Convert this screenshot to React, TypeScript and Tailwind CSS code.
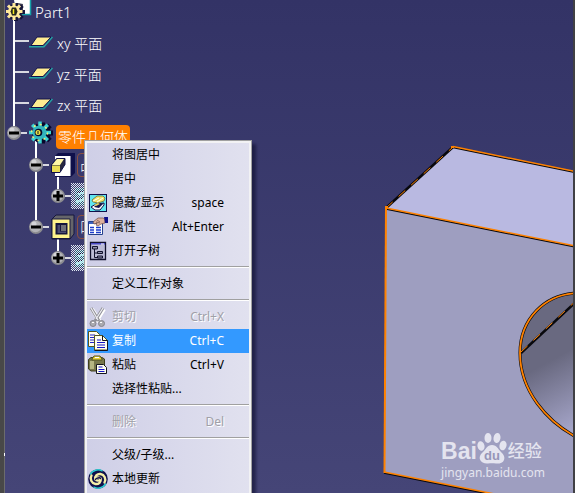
import React from "react";

type IconName = "visibility" | "properties" | "subtree" | "cut" | "copy" | "paste" | "update";

interface MenuEntry {
  label: string;
  shortcut?: string;
  icon?: IconName;
  disabled?: boolean;
  active?: boolean;
}

const MENU_GROUPS: MenuEntry[][] = [
  [
    { label: "将图居中" },
    { label: "居中" },
    { label: "隐藏/显示", shortcut: "space", icon: "visibility" },
    { label: "属性", shortcut: "Alt+Enter", icon: "properties" },
    { label: "打开子树", icon: "subtree" },
  ],
  [{ label: "定义工作对象" }],
  [
    { label: "剪切", shortcut: "Ctrl+X", icon: "cut", disabled: true },
    { label: "复制", shortcut: "Ctrl+C", icon: "copy", active: true },
    { label: "粘贴", shortcut: "Ctrl+V", icon: "paste" },
    { label: "选择性粘贴..." },
  ],
  [{ label: "删除", shortcut: "Del", disabled: true }],
  [{ label: "父级/子级..." }, { label: "本地更新", icon: "update" }],
];

const PLANES = ["xy 平面", "yz 平面", "zx 平面"];

/* ---------- Menu icons ---------- */

const MenuIcon: React.FC<{ name: IconName }> = ({ name }) => {
  switch (name) {
    case "visibility":
      return (
        <svg viewBox="0 0 20 20" className="h-5 w-5">
          <rect x="1.5" y="1.5" width="17" height="17" fill="#5fe6f0" stroke="#10104a" />
          <path d="M9 3h6l2 2-1 3-6 2-5-1-1-2z" fill="#f3e368" stroke="#6b6b30" strokeWidth=".8" />
          <path d="M5 8l6-3M9 9l6-4" stroke="#fff" />
          <path d="M8 11l8-1v2l-4 5H7l-4-3z" fill="#fff" stroke="#10104a" />
          <path d="M9 11l7-1-5 5-5-1z" fill="#17174f" />
          <path d="M6 12l4-2 2 1-4 2z" fill="#e8d860" />
        </svg>
      );
    case "properties":
      return (
        <svg viewBox="0 0 20 20" className="h-5 w-5">
          <path d="M.5 4.500h14v13H.5z" fill="#fff" stroke="#24408c" />
          <path d="M1 5h8v2H1z" fill="#3b62c0" />
          <path d="M2 10.500h4M8 10.500h5M2 13h4M8 13h5M2 15.500h4M8 15.500h5" stroke="#1c3ccc" strokeWidth="1.300" />
          <path d="M5 5l5-4h5l2 1v4l-4 1-3 2-2-1 1-2-3 1z" fill="#dcb09c" stroke="#6d4a44" strokeWidth=".7" />
          <path d="M9 3l3 2M8 5l4 1" stroke="#6d4a44" strokeWidth=".7" />
          <path d="M16 0h4v6h-3z" fill="#10108a" />
        </svg>
      );
    case "subtree":
      return (
        <svg viewBox="0 0 20 20" className="h-5 w-5">
          <path d="M2.500 1.500h15v17h-15z" fill="#bcbcd6" stroke="#11112c" strokeWidth="1.300" />
          <path d="M3 2h14v1.500H3z" fill="#4848c4" />
          <path d="M13 3h3" stroke="#fff" />
          <path d="M6.500 7v9.500H11M7 12h3" fill="none" stroke="#11112c" />
          <path d="M4.500 5.500h5v2.500h-5zM9.500 10.500h5v2h-5zM9.500 15h5v2h-5z" fill="#8e8ea8" stroke="#11112c" />
        </svg>
      );
    case "cut":
      return (
        <svg viewBox="0 0 20 20" className="h-5 w-5" fill="none">
          <path d="M4 2l8 13M16 2L8 15" stroke="#fff" strokeWidth="4" />
          <path d="M3 1l8 13M15 1L7 14" stroke="#919198" strokeWidth="3" />
          <path d="M3 1l7 12M15 1L8 12" stroke="#eeeef4" strokeWidth="1.200" />
          <circle cx="5" cy="16.500" r="3" fill="#aaaab0" stroke="#85858c" />
          <circle cx="13.500" cy="16.500" r="3" fill="#aaaab0" stroke="#85858c" />
          <path d="M4 15.500h2M12 15.500h2" stroke="#fff" />
        </svg>
      );
    case "copy":
      return (
        <svg viewBox="0 0 20 20" className="h-5 w-5">
          <path d="M.5.500h8l3 3v12H.5z" fill="#fffff0" stroke="#55551e" />
          <path d="M2 4h5M2 6.500h4M2 9h4M2 11.500h4" stroke="#2424c8" />
          <path d="M6.500 4.500h8l5 5v9.500h-13z" fill="#fffff0" stroke="#55551e" />
          <path d="M14.500 4.500v5h5M19.500 9.500V19.500h-13" fill="none" stroke="#15151c" />
          <path d="M9 9h4M9 11.500h8M9 14h8M9 16.500h8" stroke="#1414c8" />
        </svg>
      );
    case "paste":
      return (
        <svg viewBox="0 0 20 20" className="h-5 w-5">
          <path d="M.5 4.500L3 2.500h11l2.500 1.500v10l-3 2H3l-2.500-2z" fill="#77774c" stroke="#3f3f1c" />
          <path d="M2 6h4v8H2z" fill="#b5b582" />
          <path d="M4 4l2-3h6l2 3v1H4z" fill="#ecd33a" stroke="#55551e" />
          <path d="M7 2.500h4" stroke="#fff" />
          <path d="M8.500 9.500h7l3 3v6h-10z" fill="#fffff0" stroke="#15151c" />
          <path d="M10.500 12h4M10.500 14.500h6M10.500 16.500h6" stroke="#1414c8" />
        </svg>
      );
    case "update":
      return (
        <svg viewBox="0 0 20 20" className="h-5 w-5" fill="none" strokeLinecap="round">
          <circle cx="10" cy="10" r="9.800" fill="#10104c" />
          <path d="M2.500 5A9 9 0 0 1 14 1.800M17.500 15A9 9 0 0 1 6 18.200" stroke="#29ccd0" strokeWidth="1.500" />
          <path d="M12.500 9.500c0 2.500-4 3-5 .5-1-3 2-5.500 5-5 4 .7 6 5 4 8.500" stroke="#f5efa8" strokeWidth="2.400" />
          <path d="M7.500 10.500c0-2.500 4-3 5-.5 1 3-2 5.500-5 5-4-.7-6-5-4-8.500" stroke="#f5efa8" strokeWidth="2.400" />
          <path d="M7.500 10.500c.5-1.500 4.500-2.500 5-1" stroke="#10104c" strokeWidth="1.400" />
        </svg>
      );
  }
};

/* ---------- Tree icons ---------- */

const TEETH = [0, 45, 90, 135, 180, 225, 270, 315];

const Teeth: React.FC<{ cx: number; cy: number; r: number; width: number; color: string }> = ({
  cx,
  cy,
  r,
  width,
  color,
}) => (
  <g stroke={color} strokeWidth={width}>
    {TEETH.map((angle) => (
      <path key={angle} d={`M${cx} ${cy}v${-r}`} transform={`rotate(${angle} ${cx} ${cy})`} />
    ))}
  </g>
);

const PartIcon = () => (
  <svg viewBox="0 0 27 28" className="h-7 w-[27px] shrink-0">
    <path d="M8 0h17v15H11z" fill="#fff" />
    <path d="M24.500 0v14.500H16" fill="none" stroke="#16a0a8" strokeWidth="1.500" />
    <path d="M12 3l5 1v9l-4 5z" fill="#4b4b5c" />
    <path d="M8 18v10" stroke="#fff" strokeWidth="2" />
    <Teeth cx={10} cy={12} r={9} width={4} color="#16163c" />
    <circle cx="9" cy="12" r="7" fill="#16163c" />
    <Teeth cx={8} cy={11.5} r={8.500} width={3} color="#ffe99a" />
    <circle cx="8" cy="11.500" r="6" fill="#ffe99a" />
    <path d="M6 7.500h4l1.500 4-1.500 4H6l-1.500-4z" fill="#26261c" />
    <path d="M7.500 9v5" stroke="#f0e820" strokeWidth="1.500" />
  </svg>
);

const PlaneIcon = () => (
  <svg viewBox="0 0 24 12" className="h-3 w-6">
    <path d="M0 10.800h15L23.500 1" fill="none" stroke="#23a3a4" strokeWidth="1.500" />
    <path d="M8 1h14l-8 8.500H2z" fill="#ffed91" stroke="#10104a" />
  </svg>
);

const BodyIcon = () => (
  <svg viewBox="0 0 24 28" className="h-7 w-6">
    <path d="M7 20v8" stroke="#fff" strokeWidth="2" />
    <Teeth cx={13.5} cy={12} r={10.500} width={5} color="#08082c" />
    <circle cx="13" cy="12" r="9" fill="#08082c" />
    <Teeth cx={11} cy={11.500} r={11} width={3.500} color="#3cd3d3" />
    <circle cx="10.500" cy="11.500" r="7" fill="#32b4bd" />
    <circle cx="10.500" cy="11.500" r="8" fill="none" stroke="#f1ef75" strokeWidth="1.500" strokeDasharray="2 4.280" />
    <circle cx="9.500" cy="11.500" r="3.800" fill="#08082c" />
    <circle cx="9" cy="11.500" r="2.500" fill="#e9e641" />
    <path d="M9 10v3" stroke="#08082c" />
  </svg>
);

const PadIcon = () => (
  <svg viewBox="0 0 24 31" className="h-[31px] w-6">
    <path d="M7 26v5" stroke="#fff" strokeWidth="2" />
    <path d="M4 7l3-3h17v20l-4 4H4z" fill="#10104a" />
    <path d="M4 7h15.500v20H4z" fill="#fff" />
    <path d="M5.500 9.500h8.500v6l-5 8H.5V16z" fill="#28283e" stroke="#10104a" />
    <path d="M6 10h7l-4 6H1z" fill="#fff7a6" />
    <path d="M1 16.500h8V23H1z" fill="#ebdd55" />
  </svg>
);

const PocketIcon = () => (
  <svg viewBox="0 0 24 31" className="h-[31px] w-6">
    <path d="M7 26v5" stroke="#fff" strokeWidth="2" />
    <path d="M1 8l4-4h18v19l-4 5H1z" fill="#65656a" stroke="#16163c" />
    <path d="M1 8h18v19.500H1z" fill="#fff38c" stroke="#16163c" />
    <path d="M4.500 12h12v11.500h-12z" fill="#16163c" />
    <path d="M10 14h5v6h-5z" fill="#6f6f78" />
    <path d="M6.500 14H9v6.500h6V22H6.500z" fill="#4b4b70" />
  </svg>
);

const SketchIcon: React.FC<{ id: string }> = ({ id }) => (
  <svg viewBox="0 0 24 26" className="h-[26px] w-6" shapeRendering="crispEdges">
    <defs>
      <pattern id={id} width="2" height="2" patternUnits="userSpaceOnUse">
        <path d="M0 0h1v1H0zM1 1h1v1H1z" fill="#dfe8f2" />
      </pattern>
    </defs>
    <path d="M4 5h18v17H4z" fill="#246078" />
    <path d="M6 8h8v2H6zM6 15h6v3H6z" fill="#141440" />
    <path d="M7 11l8-2M5 19l9-3" stroke="#8ce6e6" strokeWidth="2" />
    <path d="M0 0h24v26H0z" fill={`url(#${id})`} />
  </svg>
);

const Ball: React.FC<{ open: boolean }> = ({ open }) => (
  <button aria-label={open ? "收起" : "展开"} className="block h-[14px] w-[14px] shrink-0">
    <svg viewBox="0 0 14 14" className="h-[14px] w-[14px]">
      <circle cx="7" cy="7" r="7" fill="#8c8c90" />
      <circle cx="6.500" cy="6.500" r="5.800" fill="#b2b2b6" />
      <circle cx="5" cy="4" r="2.500" fill="#d4d4d8" />
      <path d={open ? "M2 7h10" : "M2 7h10M7 2v10"} stroke="#000" strokeWidth="3" />
    </svg>
  </button>
);

/* ---------- Tree rails ---------- */

const Line = () => <span className="ml-[8px] mr-3 w-[2px] shrink-0 self-stretch bg-white" />;

interface NodeProps {
  open: boolean;
  above?: boolean;
  below?: boolean;
}

const Node: React.FC<NodeProps> = ({ open, above = true, below = false }) => (
  <span className="ml-[2px] flex shrink-0 items-center self-stretch">
    <span className="flex flex-col items-center self-stretch">
      <span className={`w-[2px] flex-1 ${above ? "bg-white" : ""}`} />
      <Ball open={open} />
      <span className={`w-[2px] flex-1 ${below ? "bg-white" : ""}`} />
    </span>
    <span className="h-[2px] w-[6px] bg-[#d8d8e0]" />
  </span>
);

const FeatureLabel: React.FC<{ children: React.ReactNode }> = ({ children }) => (
  <span className="ml-[2px] flex h-6 w-6 items-center overflow-hidden rounded-sm border border-[#8c5040] pl-[2px]">
    {children}
  </span>
);

const SpecTree = () => (
  <ul className="relative whitespace-nowrap text-sm font-light text-white">
    <li className="flex h-7">
      <span className="ml-[1px]">
        <PartIcon />
      </span>
      <span className="ml-[2px] text-[15px] leading-6">Part1</span>
    </li>
    {PLANES.map((plane) => (
      <li key={plane} className="flex h-[31px] items-center">
        <span className="ml-[8px] flex w-4 items-center self-stretch border-l-2 border-white pb-[6px]">
          <span className="h-[2px] w-full bg-[#d8d8e0]" />
        </span>
        <span className="pb-1">
          <PlaneIcon />
        </span>
        <span className="ml-1">{plane}</span>
      </li>
    ))}
    <li className="flex h-7 items-start">
      <span className="flex h-6">
        <Node open />
      </span>
      <span className="ml-[2px]">
        <BodyIcon />
      </span>
      <span className="ml-[3px] mt-1 h-6 rounded-sm bg-[#ff8000] px-[2px] leading-6">零件几何体</span>
    </li>
    <li className="flex h-[31px] items-center">
      <span className="w-[22px]" />
      <Node open below />
      <span className="ml-[2px]">
        <PadIcon />
      </span>
      <FeatureLabel>凸</FeatureLabel>
    </li>
    <li className="flex h-[31px] items-center">
      <span className="w-[22px]" />
      <Line />
      <Node open={false} />
      <SketchIcon id="dither-pad" />
    </li>
    <li className="flex h-[31px] items-center">
      <span className="w-[22px]" />
      <Node open />
      <span className="ml-[2px]">
        <PocketIcon />
      </span>
      <FeatureLabel>凹</FeatureLabel>
    </li>
    <li className="flex h-[31px] items-center">
      <span className="w-[44px]" />
      <Node open={false} />
      <SketchIcon id="dither-pocket" />
    </li>
  </ul>
);

/* ---------- 3D model ---------- */

const HOLE = "M580 293C544 293 520 320 520 353C520 390 546 422 580 439";

const Model = () => (
  <svg
    viewBox="5 0 568 493"
    preserveAspectRatio="xMinYMin slice"
    className="absolute inset-0 h-full w-full"
    fill="none"
  >
    <defs>
      <linearGradient id="bore" gradientUnits="userSpaceOnUse" x1="538" y1="340" x2="584" y2="425">
        <stop offset="0.250" stopColor="#696980" />
        <stop offset="1" stopColor="#a6a6ca" />
      </linearGradient>
    </defs>
    <path d="M386 208L453 147L580 173V247z" fill="#b9b9e1" />
    <path d="M386 208L580 247V511L384 472z" fill="#9e9ec0" />
    <path d={`${HOLE}z`} fill="url(#bore)" />
    <g stroke="#08080c" strokeWidth="1.500">
      <path d="M453 147.500L580 173.500M386 209L580 248M384 473L580 512" />
      <path d="M386 208L453 147" strokeWidth="2.500" />
      <path d="M521 353L580 298" strokeWidth="2.500" />
      <path d={HOLE} strokeWidth="3" />
    </g>
    <g stroke="#ff8200" strokeWidth="1.500">
      <path d="M453 146.500L580 172.500M386 208L580 247M384 472L580 511" />
      <path d="M386 207L384.500 473" strokeWidth="2" />
      <path d="M386 208L453 147M521 352L580 297" strokeWidth="1" strokeDasharray="9 8" />
      <path d={HOLE} strokeWidth="1.800" />
    </g>
    <path d="M385 206h3v3h-3zM451 146h3v2h-3z" fill="#ff8200" />
  </svg>
);

const Watermark = () => (
  <div className="absolute bottom-3 right-[28px] text-[#e4e4ef]">
    <div className="flex h-9 items-end">
      <span className="font-['Liberation_Sans'] text-[23px] font-bold leading-7">Bai</span>
      <svg viewBox="0 0 30 34" className="h-[34px] w-[30px]" fill="#e4e4ef">
        <ellipse cx="4" cy="15" rx="3.500" ry="4.800" transform="rotate(-12 4 15)" />
        <ellipse cx="11" cy="7" rx="3.500" ry="5" />
        <ellipse cx="20" cy="7" rx="3.500" ry="5" transform="rotate(10 20 7)" />
        <ellipse cx="26" cy="14.500" rx="3.500" ry="4.800" transform="rotate(14 26 14.500)" />
        <path d="M15 14c5 0 6 4 9 7s4 5 3 8-5 4-8 3.500-5-.5-8 0-7-1-8-4 1-6 3-7.500c3-2.500 4-7 9-7z" />
        <text x="15" y="29" textAnchor="middle" fontFamily="Liberation Sans" fontSize="13" fontWeight="700" fill="#9696b8">
          du
        </text>
      </svg>
      <span className="ml-[1px] text-[17px] font-medium leading-7">经验</span>
    </div>
    <div className="text-xs leading-4">jingyan.baidu.com</div>
  </div>
);

/* ---------- Context menu ---------- */

const MenuRow: React.FC<{ entry: MenuEntry }> = ({ entry }) => {
  let tone = "text-black";
  if (entry.disabled) tone = "text-[#a0a0a8] [text-shadow:1px_1px_0_#fff]";
  if (entry.active) tone = "bg-[#3399ff] text-white";

  return (
    <button
      role="menuitem"
      disabled={entry.disabled}
      className={`flex h-6 w-full items-center pr-[25px] text-left ${tone}`}
    >
      <span className="w-[25px] pl-[1px]">{entry.icon && <MenuIcon name={entry.icon} />}</span>
      <span className="flex-1">{entry.label}</span>
      {entry.shortcut && <span>{entry.shortcut}</span>}
    </button>
  );
};

const ContextMenu = () => (
  <div
    role="menu"
    className="absolute left-[79px] top-[140px] w-[168px] border border-[#a0a0a0] bg-[#f2f2f4] p-[2px] text-xs shadow-[4px_4px_3px_rgba(10,10,40,0.55)]"
  >
    <div className="bg-linear-to-r from-[#cfcfe7] to-[#e1e1ef] pb-2">
      {MENU_GROUPS.map((group, i) => (
        <React.Fragment key={i}>
          {i > 0 && (
            <div role="separator" className="pb-1 pt-[3px]">
              <div className="h-[2px] border-b border-t border-b-white border-t-[#a0a0a0]" />
            </div>
          )}
          {group.map((entry) => (
            <MenuRow key={entry.label} entry={entry} />
          ))}
        </React.Fragment>
      ))}
    </div>
  </div>
);

export default function App() {
  return (
    <div className="flex h-screen overflow-hidden font-['Noto_Sans','Noto_Sans_CJK_SC',sans-serif]">
      {/* Docked toolbar edge */}
      <div className="w-[5px] shrink-0 border-r border-[#6c6c6c] bg-[#484848] pt-[453px]">
        <div className="ml-[4px] h-[3px] w-[1px] bg-white" />
      </div>
      <main className="relative flex-1 overflow-hidden bg-linear-to-b from-[#333366] to-[#454577]">
        <Model />
        <SpecTree />
        <Watermark />
        <ContextMenu />
      </main>
      <div className="w-[2px] shrink-0 bg-[#404044]" />
    </div>
  );
}
